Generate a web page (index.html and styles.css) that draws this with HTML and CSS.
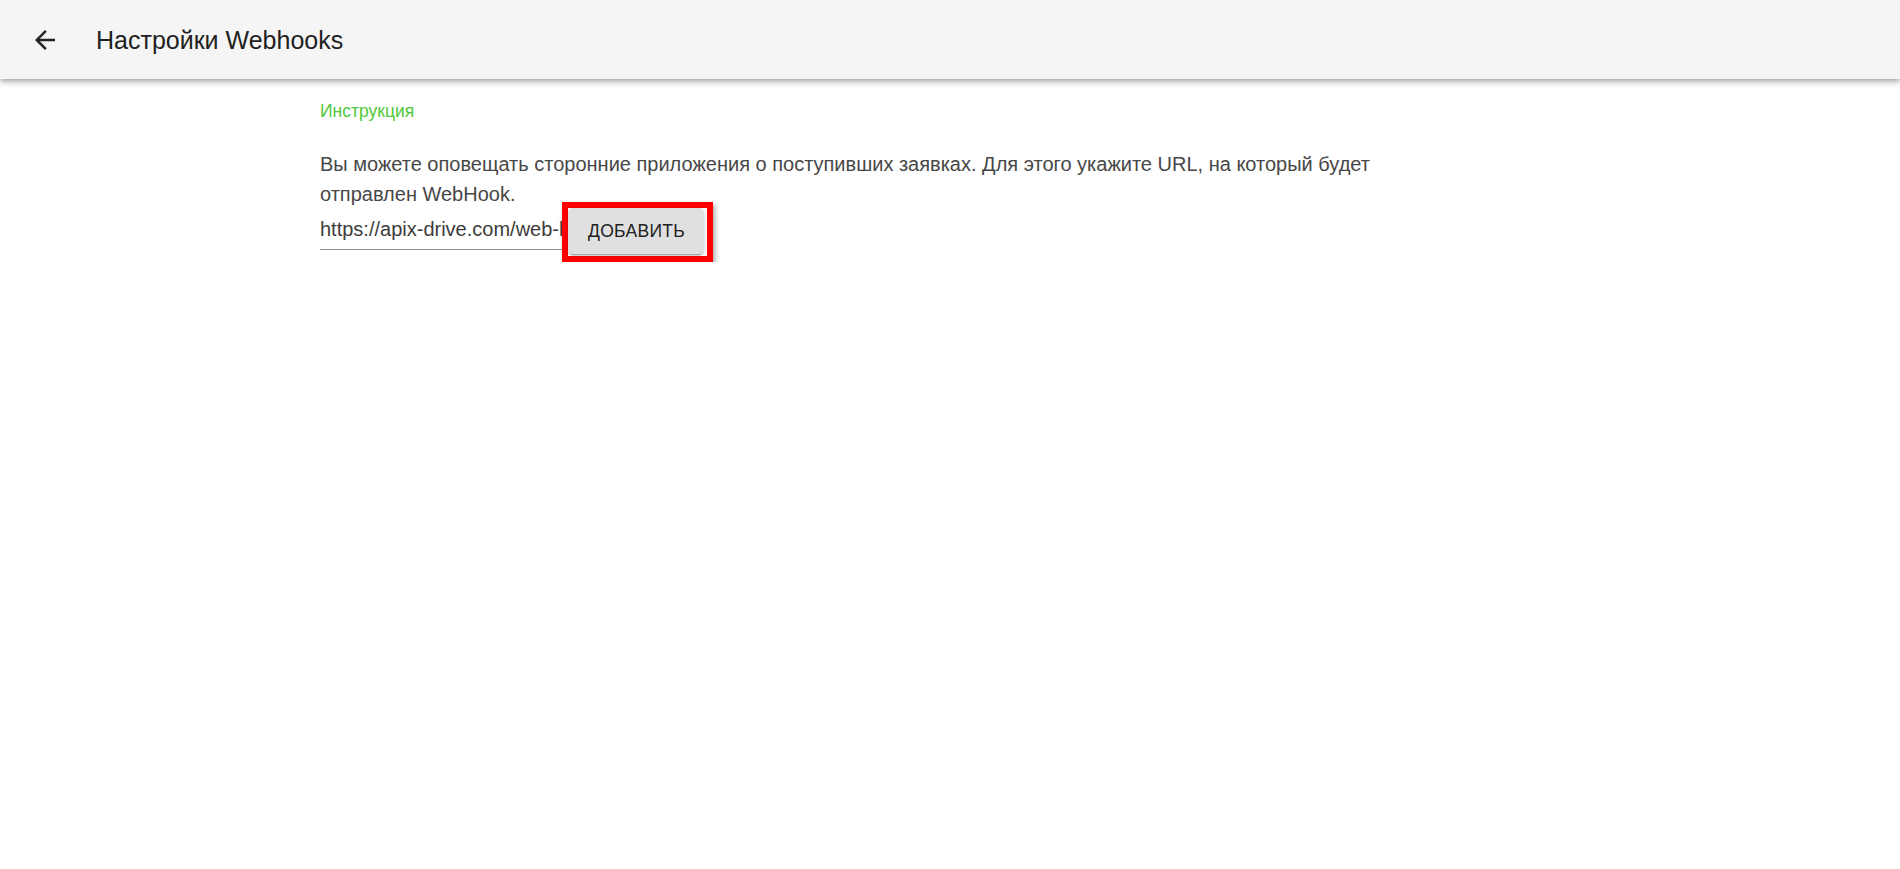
FILE: index.html
```html
<!DOCTYPE html>
<html lang="ru">
<head>
<meta charset="utf-8">
<title>Настройки Webhooks</title>
<link rel="stylesheet" href="styles.css">
</head>
<body>
<header class="appbar">
  <button class="back-btn" type="button" aria-label="Назад">
    <svg class="back-icon" viewBox="0 0 24 24" aria-hidden="true"><path d="M20 11H7.83l5.59-5.59L12 4l-8 8 8 8 1.41-1.41L7.83 13H20v-2z"/></svg>
  </button>
  <h1 class="appbar-title">Настройки Webhooks</h1>
</header>
<main class="content">
  <a class="instruction-link" href="#">Инструкция</a>
  <p class="description">Вы можете оповещать сторонние приложения о поступивших заявках. Для этого укажите URL, на который будет отправлен WebHook.</p>
  <div class="url-row">
    <div class="url-field">
      <input class="url-input" type="text" value="https://apix-drive.com/web-hook/cases">
    </div>
    <span class="highlight">
      <button class="add-btn" type="button">Добавить</button>
    </span>
  </div>
</main>
</body>
</html>
```
FILE: styles.css
```css
html, body {
  margin: 0;
  padding: 0;
  background: #ffffff;
  font-family: "Liberation Sans", Arial, sans-serif;
}

.appbar {
  height: 79px;
  background: #f5f5f5;
  display: flex;
  align-items: center;
  padding-left: 30px;
  box-shadow: 0 2px 4px -1px rgba(0,0,0,0.2), 0 4px 5px 0 rgba(0,0,0,0.14), 0 1px 10px 0 rgba(0,0,0,0.12);
  position: relative;
  z-index: 1;
}

.back-btn {
  width: 30px;
  height: 30px;
  padding: 0;
  border: 0;
  background: transparent;
  display: flex;
  align-items: center;
  justify-content: center;
  cursor: pointer;
}

.back-icon {
  width: 30px;
  height: 30px;
  fill: #222222;
}

.appbar-title {
  margin: 0 0 0 36px;
  font-size: 25px;
  font-weight: 400;
  line-height: 40px;
  color: #212121;
}

.content {
  width: 1120px;
  margin-left: 320px;
  padding-top: 19px;
}

.instruction-link {
  display: block;
  font-size: 17.5px;
  line-height: 26px;
  color: #4fc83a;
  text-decoration: none;
}

.description {
  margin: 25px 0 0 0;
  font-size: 20px;
  line-height: 30px;
  color: #474747;
}

.url-row {
  display: flex;
  align-items: flex-start;
}

.url-field {
  width: 248px;
  border-bottom: 1px solid #949494;
  padding: 8px 0 8px 0;
  overflow: hidden;
}

.url-input {
  display: block;
  width: 300px;
  border: 0;
  outline: none;
  padding: 0;
  margin: 0;
  background: transparent;
  font-family: "Liberation Sans", Arial, sans-serif;
  font-size: 20px;
  line-height: 24px;
  height: 24px;
  color: #3c3c3c;
}

.highlight {
  display: inline-flex;
  margin: -7px 0 0 -6px;
  border: 6px solid #ff0000;
  padding: 0 3px 2px 0;
  box-shadow: 2px 3px 5px rgba(0,0,0,0.35);
  background: #ffffff;
  position: relative;
}

.add-btn {
  height: 46px;
  padding: 0 19px 0 20px;
  border: 0;
  border-radius: 5px;
  background: #e0e0e0;
  font-family: "Liberation Sans", Arial, sans-serif;
  font-size: 17.5px;
  text-transform: uppercase;
  letter-spacing: 0.3px;
  color: #212121;
  box-shadow: 0 3px 1px -2px rgba(0,0,0,0.2), 0 2px 2px 0 rgba(0,0,0,0.14), 0 1px 5px 0 rgba(0,0,0,0.12);
  cursor: pointer;
}
```
